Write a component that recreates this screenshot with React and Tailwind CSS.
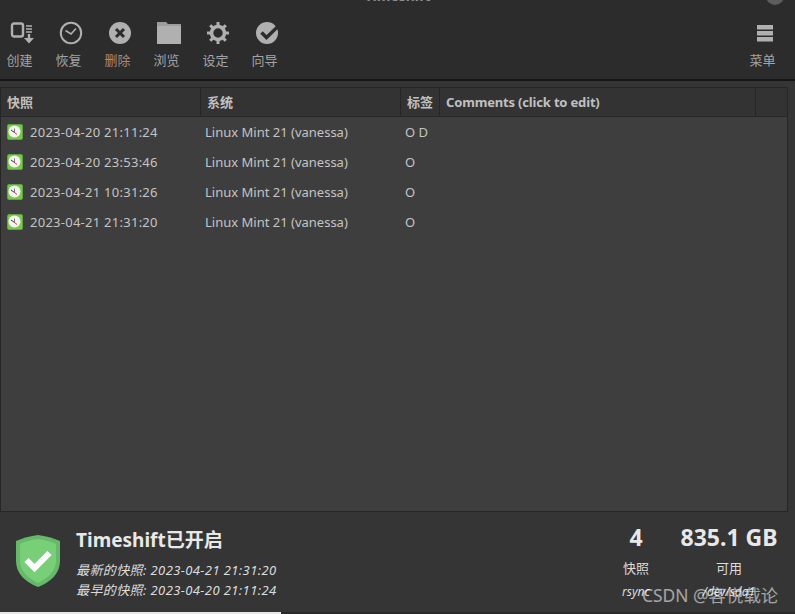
import { useState } from "react";

const font = "font-['Noto_Sans','Noto_Sans_CJK_SC',sans-serif]";

const snapshots = [
  { date: "2023-04-20 21:11:24", tags: "O D" },
  { date: "2023-04-20 23:53:46", tags: "O" },
  { date: "2023-04-21 10:31:26", tags: "O" },
  { date: "2023-04-21 21:31:20", tags: "O" },
];

const CreateIcon = () => (
  <svg width="24" height="24" viewBox="0 0 24 24" fill="none">
    <rect x="2" y="2.500" width="11" height="13" rx="2" stroke="#b0b0b0" strokeWidth="2.400" />
    <path d="M16 5h6M16 8h6M16 11h6" stroke="#b0b0b0" strokeWidth="1.500" />
    <path d="M17.800 13h2.400v4H24l-5 5.500-5-5.500h3.800z" fill="#b0b0b0" />
  </svg>
);

const RestoreIcon = () => (
  <svg width="24" height="24" viewBox="0 0 24 24" fill="none">
    <circle cx="12" cy="12" r="10.200" stroke="#b0b0b0" strokeWidth="2" />
    <path d="M6.500 9.500L12 13l5-5.500" stroke="#b0b0b0" strokeWidth="1.600" />
  </svg>
);

const DeleteIcon = () => (
  <svg width="24" height="24" viewBox="0 0 24 24">
    <circle cx="12" cy="12" r="11" fill="#b0b0b0" />
    <path d="M8 8l8 8M16 8l-8 8" stroke="#2c2c2c" strokeWidth="3" />
  </svg>
);

const FolderIcon = () => (
  <svg width="26" height="24" viewBox="0 0 26 24">
    <path d="M1 1h9l2 2h13v2H1z" fill="#9c9c9c" />
    <path d="M1 5h24v18H1z" fill="#b0b0b0" />
  </svg>
);

const GearIcon = () => (
  <svg width="24" height="24" viewBox="0 0 24 24" fill="none">
    <circle cx="12" cy="12" r="6.500" stroke="#b0b0b0" strokeWidth="3.600" />
    <path
      d="M12 1v4M12 19v4M1 12h4M19 12h4M4.200 4.200l2.900 2.900M16.900 16.900l2.900 2.900M19.800 4.200l-2.900 2.900M7.100 16.900l-2.900 2.900"
      stroke="#b0b0b0"
      strokeWidth="3"
    />
  </svg>
);

const WizardIcon = () => (
  <svg width="24" height="24" viewBox="0 0 24 24">
    <circle cx="12" cy="12" r="11" fill="#b0b0b0" />
    <path d="M6.500 11.500l5 5L24 4.500" fill="none" stroke="#2c2c2c" strokeWidth="3.400" />
  </svg>
);

const MenuIcon = () => (
  <svg width="24" height="24" viewBox="0 0 24 24">
    <path d="M4 4h16v4.500H4zM4 10h16v4.500H4zM4 16h16v4.500H4z" fill="#b0b0b0" />
  </svg>
);

const ClockBadge = () => (
  <svg width="16" height="16" viewBox="0 0 16 16">
    <rect x="0.500" y="0.500" width="15" height="15" rx="1.500" fill="#78c850" stroke="#5da63d" />
    <circle cx="7.500" cy="7.500" r="6" fill="#f4f4f0" />
    <path d="M4 6L7.500 8.500" stroke="#222" strokeWidth="0.900" />
    <path d="M7.500 8.500L7.500 4.500" stroke="#444" strokeWidth="0.700" />
    <path d="M7.500 8.500l2.500 2" stroke="#c03030" strokeWidth="0.900" />
  </svg>
);

const Shield = () => (
  <svg width="46" height="54" viewBox="0 0 46 54">
    <path d="M23 1C31 2 38 4 45 7v20C45 39 36 48 23 53 10 48 1 39 1 27V7C8 4 15 2 23 1z" fill="#66b96a" />
    <path d="M23 5C30 6 36 7.500 41 10v17C41 37 33 44 23 49 13 44 5 37 5 27V10C10 7.500 16 6 23 5z" fill="#78cf78" />
    <path d="M11.500 26l8 8 15-15" fill="none" stroke="#fff" strokeWidth="6" />
  </svg>
);

function ToolButton({ icon, label, tint }) {
  return (
    <button className="flex w-[49px] flex-col items-center">
      <span className="ml-[4px] flex h-[24px] items-center">{icon}</span>
      <span className={`mt-[5px] text-[13px] leading-[20px] ${tint || "text-[#a3a3a3]"}`}>{label}</span>
    </button>
  );
}

function HeaderCell({ className, children }) {
  return (
    <div className={`flex items-center border-r border-[#262626] px-[6px] pt-[2px] text-[13px] font-bold text-[#c0c0c0] ${className}`}>
      {children}
    </div>
  );
}

export default function App() {
  const [selected, setSelected] = useState(null);

  return (
    <div className={`relative flex h-[614px] w-[795px] flex-col overflow-hidden bg-[#353535] ${font}`}>
      {/* Title + toolbar */}
      <div className="relative flex h-[81px] shrink-0 items-start justify-between border-b-2 border-[#161616] bg-[#2c2c2c] pt-[21px]">
        <div className="absolute top-[-15px] left-0 w-full text-center text-[14px] font-bold text-[#8e8e8e]">Timeshift</div>
        <div className="absolute top-[-13px] left-[766px] h-[18px] w-[18px] rounded-full bg-[#5d5d5d]" />
        <div className="-ml-[5px] flex">
          <ToolButton icon={<CreateIcon />} label="创建" />
          <ToolButton icon={<RestoreIcon />} label="恢复" />
          <ToolButton icon={<DeleteIcon />} label="删除" tint="text-[#a88a78]" />
          <ToolButton icon={<FolderIcon />} label="浏览" />
          <ToolButton icon={<GearIcon />} label="设定" />
          <ToolButton icon={<WizardIcon />} label="向导" />
        </div>
        <div className="mr-[8px]">
          <ToolButton icon={<MenuIcon />} label="菜单" />
        </div>
      </div>

      {/* Snapshot list */}
      <div className="flex min-h-0 flex-1 flex-col pt-[6px] pr-[7px]">
        <div className="flex min-h-0 flex-1 flex-col border border-[#262626] bg-[#3e3e3e]">
          <div className="flex h-[29px] shrink-0 border-b border-[#262626] bg-[#333333]">
            <HeaderCell className="w-[200px]">快照</HeaderCell>
            <HeaderCell className="w-[200px]">系统</HeaderCell>
            <HeaderCell className="w-[39px]">标签</HeaderCell>
            <HeaderCell className="w-[316px] text-[12px] tracking-[-0.17px]">Comments (click to edit)</HeaderCell>
            <div className="flex-1" />
          </div>
          {snapshots.map((s) => (
            <div
              key={s.date}
              onClick={() => setSelected(s.date)}
              className={`flex h-[30px] items-center pt-[2px] text-[13px] text-[#c4c4c4] ${selected === s.date ? "bg-[#505050]" : ""}`}
            >
              <div className="flex w-[204px] items-center pl-[6px]">
                <span className="-mt-[3px]">
                  <ClockBadge />
                </span>
                <span className="ml-[7px] tracking-[0.26px]">{s.date}</span>
              </div>
              <div className="w-[200px]">Linux Mint 21 (vanessa)</div>
              <div>{s.tags}</div>
            </div>
          ))}
        </div>
      </div>

      {/* Status footer */}
      <div className="flex h-[102px] shrink-0 items-start justify-between border-b-2 border-[#2a2a2a] bg-[#353535] text-[#dcdcdc]">
        <div className="flex">
          <div className="mt-[22px] ml-[15px]">
            <Shield />
          </div>
          <div className="ml-[15px] pt-[14px]">
            <div className="text-[19px] leading-[28px] font-bold text-[#e8e8e8]">Timeshift已开启</div>
            <div className="mt-[6px] text-[13px] leading-[20px] tracking-[0.4px] italic">最新的快照: 2023-04-21 21:31:20</div>
            <div className="text-[13px] leading-[20px] tracking-[0.4px] italic">最早的快照: 2023-04-20 21:11:24</div>
          </div>
        </div>
        <div className="flex pt-[10px] pr-[18px]">
          <div className="flex w-[30px] flex-col items-center">
            <div className="text-[23px] leading-[30px] font-bold text-[#e8e8e8]">4</div>
            <div className="mt-[6px] text-[13px] leading-[20px]">快照</div>
            <div className="mt-[5px] text-[12px] leading-[18px] italic">rsync</div>
          </div>
          <div className="ml-[30px] flex w-[96px] flex-col items-center">
            <div className="text-[23px] leading-[30px] font-bold whitespace-nowrap text-[#e8e8e8]">835.1 GB</div>
            <div className="mt-[6px] text-[13px] leading-[20px]">可用</div>
            <div className="mt-[5px] text-[12px] leading-[18px] italic">/dev/sda1</div>
          </div>
        </div>
      </div>

      <div className="absolute bottom-0 left-0 h-[2px] w-[281px] bg-[#e8e8e8]" />
      {/* Watermark */}
      <div className="absolute top-[583px] left-[642px] text-[17.400px] leading-[24px] whitespace-nowrap text-[#ffffff]/55">CSDN @客悦载论</div>
    </div>
  );
}
